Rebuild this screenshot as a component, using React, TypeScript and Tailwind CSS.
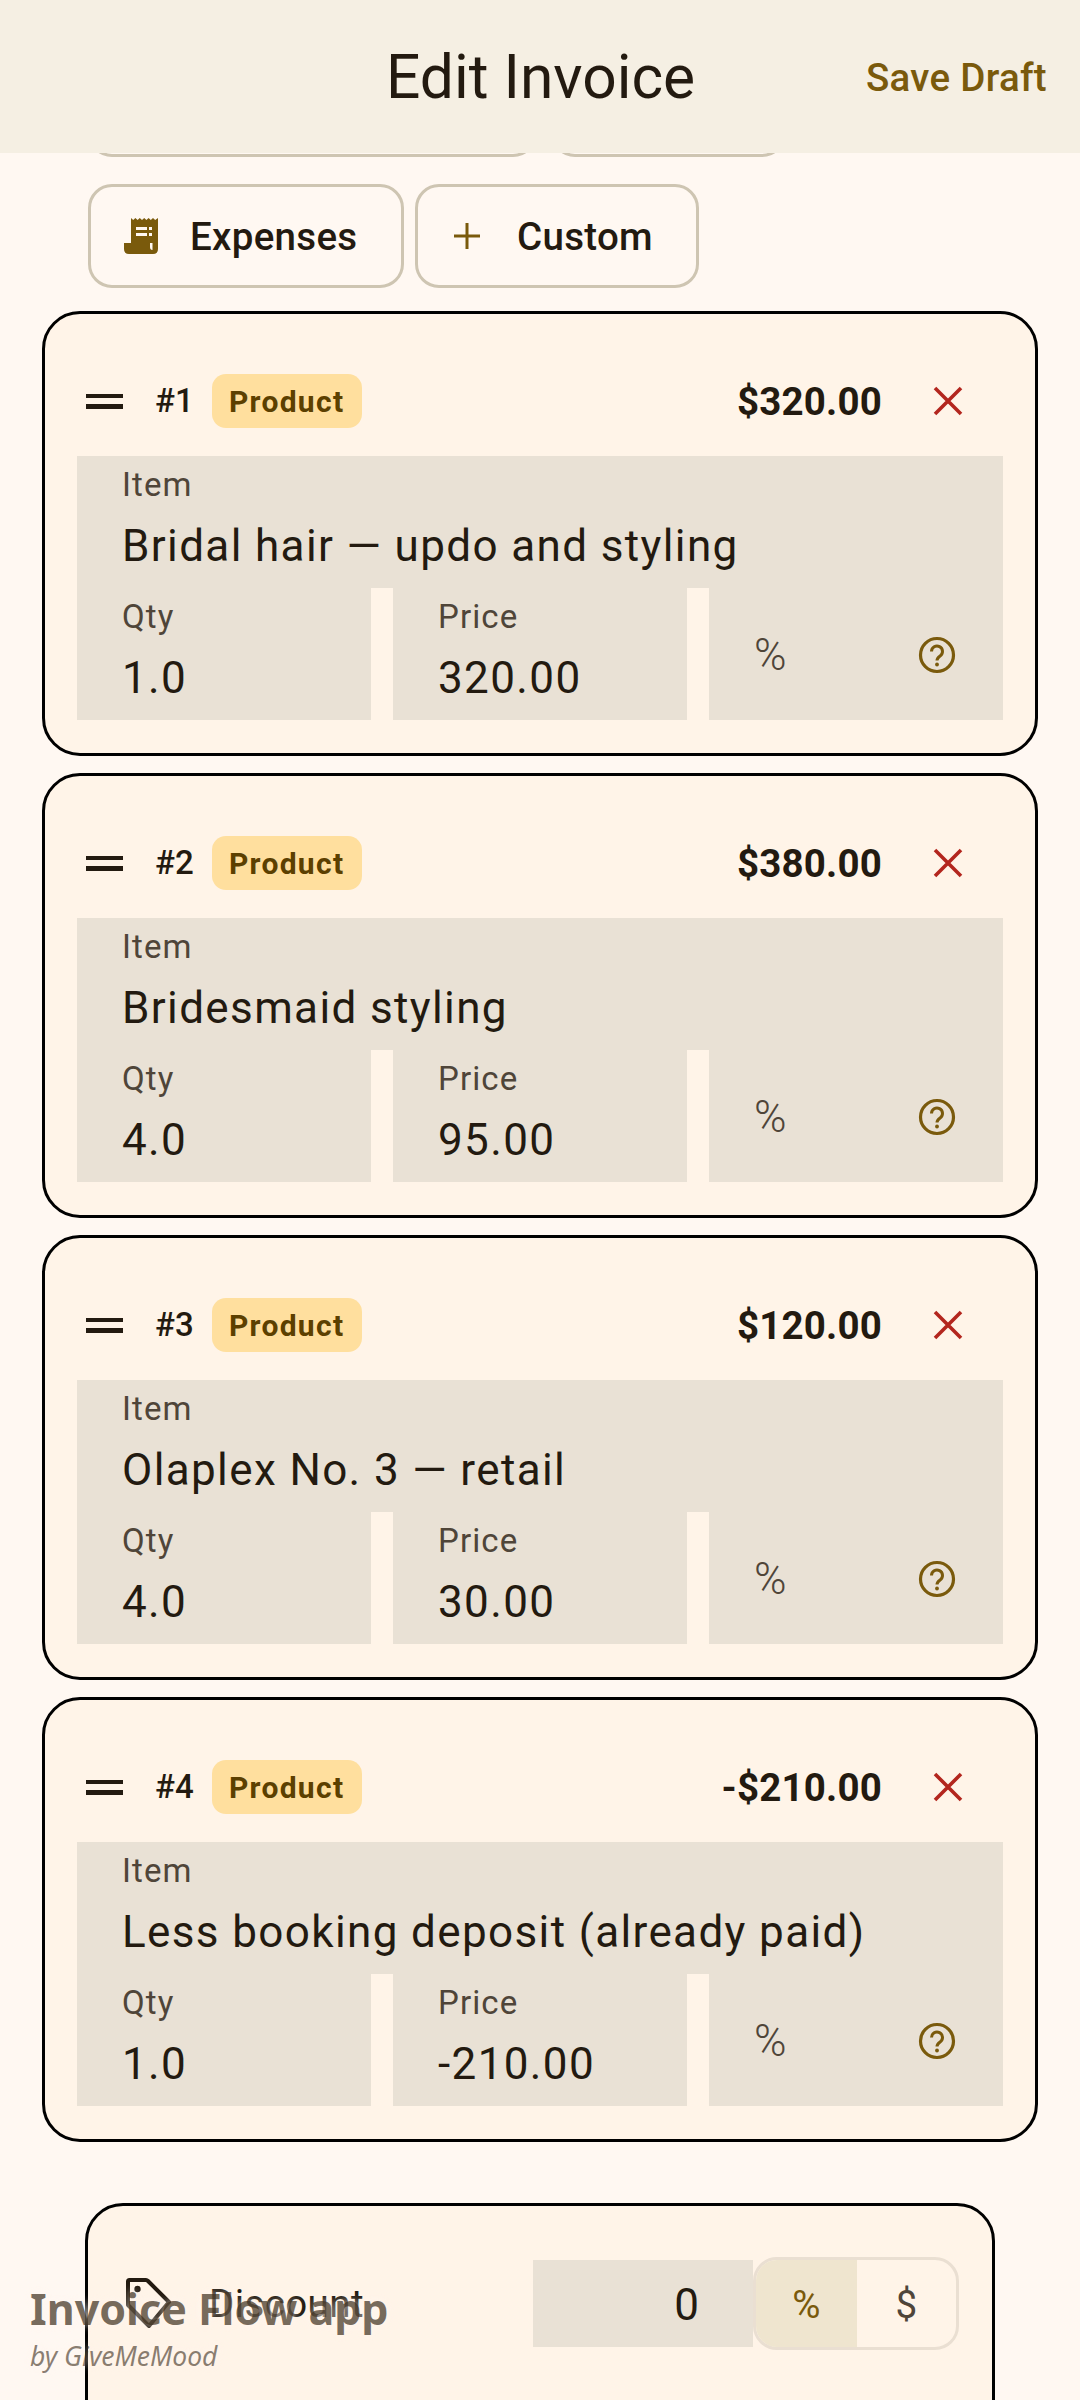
type LineItem = {
  no: number;
  amount: string;
  name: string;
  qty: string;
  price: string;
};

const items: LineItem[] = [
  { no: 1, amount: "$320.00", name: "Bridal hair — updo and styling", qty: "1.0", price: "320.00" },
  { no: 2, amount: "$380.00", name: "Bridesmaid styling", qty: "4.0", price: "95.00" },
  { no: 3, amount: "$120.00", name: "Olaplex No. 3 — retail", qty: "4.0", price: "30.00" },
  { no: 4, amount: "-$210.00", name: "Less booking deposit (already paid)", qty: "1.0", price: "-210.00" },
];

const ReceiptIcon = () => (
  <svg width="34" height="36" viewBox="0 0 34 36" className="shrink-0">
    <path
      fill="#7a5a0c"
      fillRule="evenodd"
      d="M7 0l2.2 2 2.2-2 2.2 2 2.2-2 2.2 2 2.2-2 2.2 2 2.2-2 2.2 2 2.2-2 2.2 2L34 0v31q0 5-5 5H5q-5 0-5-5v-6h7zM12 9v3h11V9zm13 0v3h3V9zM12 15v3h11v-3zm13 0v3h3v-3zM26 25v4q0 3 2.500 3V25z"
    />
  </svg>
);

const PlusIcon = () => (
  <svg width="28" height="28" viewBox="0 0 28 28" className="shrink-0">
    <path d="M14 1v26M1 14h26" stroke="#7a5a0c" strokeWidth="3" fill="none" />
  </svg>
);

const HelpIcon = () => (
  <svg width="38" height="38" viewBox="0 0 38 38" className="shrink-0">
    <circle cx="19" cy="19" r="16.500" stroke="#7a5a0c" strokeWidth="3.200" fill="none" />
    <path
      d="M13.500 15.500a5.500 5.500 0 1 1 8.600 4.500c-2 1.400-3.100 2.200-3.100 4.500"
      stroke="#7a5a0c"
      strokeWidth="3"
      fill="none"
    />
    <circle cx="19" cy="28.500" r="1.900" fill="#7a5a0c" />
  </svg>
);

const CloseIcon = () => (
  <svg width="30" height="30" viewBox="0 0 30 30" className="shrink-0">
    <path d="M2 2l26 26M28 2L2 28" stroke="#b3261e" strokeWidth="3.600" fill="none" />
  </svg>
);

const TagIcon = () => (
  <svg width="48" height="54" viewBox="0 0 48 54" className="shrink-0">
    <path
      d="M3 4.500q0-1.500 1.500-1.500H21q1 0 2 1l21 21-20 24L3 28z"
      stroke="#231a10"
      strokeWidth="4"
      strokeLinejoin="round"
      fill="none"
    />
    <circle cx="12.500" cy="12" r="3.200" fill="#231a10" />
  </svg>
);

const Field = ({ label, value }: { label: string; value: string }) => (
  <div className="h-[132px] bg-[#e9e1d5] pl-[45px] pt-[7px]">
    <div className="text-[33px] leading-[44px] tracking-[1.100px] text-[#4f4539]">{label}</div>
    <div className="mt-[6px] text-[44px] leading-[66px] tracking-[1.375px] text-[#231a10] whitespace-nowrap">{value}</div>
  </div>
);

const ItemCard = ({ item }: { item: LineItem }) => (
  <div className="h-[445px] rounded-[38px] border-[3px] border-black bg-[#fff4e8] px-[32px]">
    <div className="flex h-[142px] items-center pt-[54px] pb-[22px]">
      <div className="ml-[9px] flex w-[37px] flex-col gap-[6px]">
        <div className="h-[4.500px] bg-[#231a10]" />
        <div className="h-[4.500px] bg-[#231a10]" />
      </div>
      <span className="ml-[32px] text-[33px] font-medium text-[#231a10]">#{item.no}</span>
      <span className="ml-[18px] flex h-[54px] w-[150px] items-center justify-center rounded-[14px] bg-[#ffdf9e] text-[30px] font-bold tracking-[1.300px] text-[#5c4000]">
        Product
      </span>
      <span className="ml-auto pt-[1px] text-[38.500px] font-bold tracking-[0.200px] text-[#231a10]">{item.amount}</span>
      <div className="ml-[51px] mr-[40px]">
        <CloseIcon />
      </div>
    </div>
    <Field label="Item" value={item.name} />
    <div className="grid grid-cols-3 gap-[22px]">
      <Field label="Qty" value={item.qty} />
      <Field label="Price" value={item.price} />
      <div className="flex h-[132px] items-center justify-between bg-[#e9e1d5] pl-[45px] pr-[47px] pt-[2px]">
        <span className="text-[44px] font-light text-[#4f4539]">%</span>
        <HelpIcon />
      </div>
    </div>
  </div>
);

export default function App() {
  return (
    <div className="relative h-[2400px] w-[1080px] overflow-hidden bg-[#fff8f2] font-['Roboto',sans-serif]">
      <header className="relative z-10 flex h-[153px] items-center justify-between bg-[#f5efe3] pl-[386px] pr-[33px] pt-[3px]">
        <h1 className="text-[60.500px] font-normal text-[#231a10]">Edit Invoice</h1>
        <button className="text-[38.500px] font-medium tracking-[0.300px] text-[#7a5a0c]">Save Draft</button>
      </header>

      <div className="-mt-[100px] flex gap-[14px] pl-[88px]">
        <div className="h-[104px] w-[449px] rounded-[24px] border-[3px] border-[#cec5b2]" />
        <div className="h-[104px] w-[235px] rounded-[24px] border-[3px] border-[#cec5b2]" />
      </div>

      <div className="mt-[27px] flex gap-[11px] pl-[88px]">
        <div className="flex h-[104px] w-[316px] items-center rounded-[24px] border-[3px] border-[#cec5b2] pl-[33px]">
          <ReceiptIcon />
          <span className="ml-[32px] pt-[2px] text-[38.500px] font-medium tracking-[0.300px] text-[#231a10]">Expenses</span>
        </div>
        <div className="flex h-[104px] w-[284px] items-center rounded-[24px] border-[3px] border-[#cec5b2] pl-[35px]">
          <PlusIcon />
          <span className="ml-[36px] pt-[2px] text-[38.500px] font-medium tracking-[0.300px] text-[#231a10]">Custom</span>
        </div>
      </div>

      <div className="mx-[42px] mt-[23px] flex flex-col gap-[17px]">
        {items.map((item) => (
          <ItemCard key={item.no} item={item} />
        ))}
      </div>

      <div className="mx-[85px] mt-[61px] flex h-[300px] rounded-[38px] border-[3px] border-black bg-[#fff4e8] pt-[52px] pl-[37px]">
        <div className="-mt-[1px] flex h-[93px] items-center">
          <TagIcon />
          <span className="ml-[36px] text-[38.500px] tracking-[0.400px] text-[#231a10]">Discount</span>
        </div>
        <div className="ml-[169px] mt-[2px] flex h-[87px] w-[220px] items-center justify-end self-start bg-[#e9e1d5] pr-[54px] pt-[2px] text-[44px] text-[#231a10]">
          0
        </div>
        <div className="-mt-[1px] flex h-[93px] w-[206px] self-start overflow-hidden rounded-[24px] border-[3px] border-[#eadfd2] text-[38.500px]">
          <div className="flex w-[101px] items-center justify-center bg-[#efe5cf] pt-[2px] text-[#7a5a0c]">%</div>
          <div className="flex flex-1 items-center justify-center pt-[2px] text-[#4f4539]">$</div>
        </div>
      </div>

      <div className="absolute left-[30px] top-[2280px] z-20 font-['Noto_Sans',sans-serif] [text-shadow:0_0_8px_rgba(255,248,242,0.8)]">
        <div className="text-[43px] font-bold leading-[58px] text-[#3a2c1a]/70">Invoice Flow app</div>
        <div className="text-[26.500px] italic leading-[36px] text-[#3a2c1a]/60">by GiveMeMood</div>
      </div>
    </div>
  );
}
